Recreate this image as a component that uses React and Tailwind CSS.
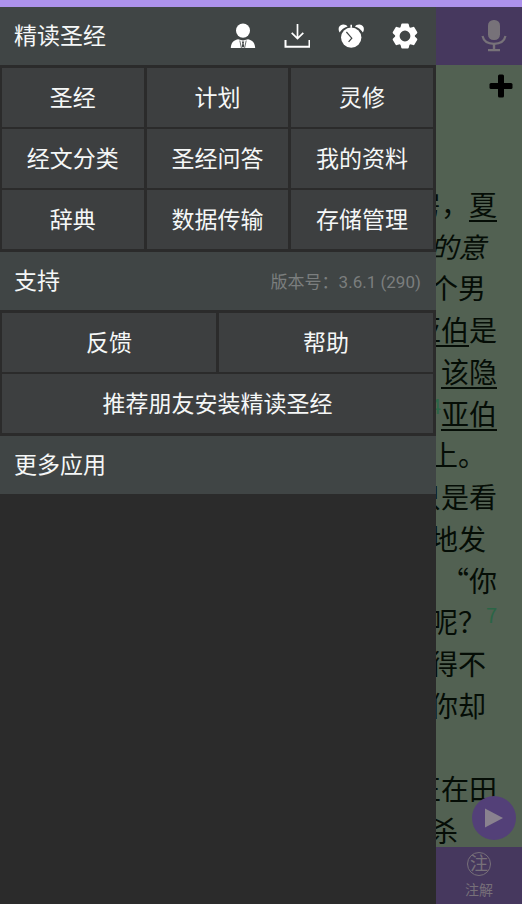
import React from "react";

const menuItems = [
  "圣经",
  "计划",
  "灵修",
  "经文分类",
  "圣经问答",
  "我的资料",
  "辞典",
  "数据传输",
  "存储管理",
];

const UserIcon = () => (
  <svg viewBox="0 0 26 26" className="size-[26px]" fill="currentColor">
    <ellipse cx="13" cy="7.6" rx="7" ry="7.2" />
    <path d="M.8 25c.2-4.600 2.200-7.600 7.200-8.800l5 1.200 5-1.200c5 1.200 7 4.200 7.200 8.800z" />
    <path
      d="M9.800 17.500l1.600 7.500M16.200 17.500l-1.600 7.500"
      fill="none"
      stroke="#404545"
      strokeWidth=".8"
    />
    <path d="M11.800 18.600h2.400l-.6 1.800.6 3-1.200 1.300-1.200-1.300.6-3z" fill="#404545" />
  </svg>
);

const DownloadIcon = () => (
  <svg
    viewBox="0 0 26 26"
    className="size-[26px]"
    fill="none"
    stroke="currentColor"
    strokeWidth="1.700"
  >
    <path d="M13.500 1v14.500M7.700 9.800l5.800 5.800 5.800-5.800" />
    <path d="M1.500 17v6.800h24V17" strokeWidth="2" />
  </svg>
);

const AlarmIcon = () => (
  <svg viewBox="0 0 26 26" className="size-[26px]" fill="currentColor">
    <path d="M1.600 9.400C-.6 5.600 1 1.600 5 1.400c2.200-.1 3.800.8 4.600 2.200-3.600 1.200-6 3.200-8 5.800z" />
    <path d="M24.900 9.400c2.200-3.800.6-7.800-3.400-8-2.200-.1-3.800.8-4.600 2.200 3.600 1.200 6 3.200 8 5.800z" />
    <circle cx="13.200" cy="14.600" r="10.200" />
    <path d="M12.400 1.800h1.600v3h-1.600z" />
    <path
      d="M8.400 9l5.400 6.200-3.200 3.600"
      fill="none"
      stroke="#404545"
      strokeWidth="1.200"
    />
  </svg>
);

const GearIcon = () => (
  <svg viewBox="0 0 26 26" className="size-[26px]" fill="currentColor">
    <circle cx="13" cy="13" r="7.600" fill="none" stroke="currentColor" strokeWidth="4.400" />
    {[0, 60, 120, 180, 240, 300].map((angle) => (
      <path
        key={angle}
        d="M8.200 5.400l1-4q.2-.9 1.100-.9h5.400q.9 0 1.100.9l1 4z"
        transform={`rotate(${angle} 13 13)`}
      />
    ))}
  </svg>
);

const MicIcon = () => (
  <svg viewBox="0 0 26 32" className="h-8 w-[26px]" fill="currentColor">
    <rect x="7" y="0" width="12" height="20" rx="5.500" />
    <path
      d="M1.500 16c1.200 5.400 5.600 7.800 11.500 7.800S23.300 21.400 24.500 16"
      fill="none"
      stroke="currentColor"
      strokeWidth="2.200"
    />
    <path d="M11.800 24h2.400v5h-2.400zM7 29h12v2.200H7z" />
  </svg>
);

const headerActions = [
  { label: "账户", Icon: UserIcon },
  { label: "下载", Icon: DownloadIcon },
  { label: "提醒", Icon: AlarmIcon },
  { label: "设置", Icon: GearIcon },
];

const MenuButton = ({ children, className = "" }) => (
  <button
    type="button"
    className={`flex h-[59px] items-center justify-center bg-[#3d3f40] pt-[2px] text-[23px] leading-8 ${className}`}
  >
    {children}
  </button>
);

const SectionHeader = ({ title, children }) => (
  <div className="flex h-[58px] items-center justify-between bg-[#404545] pl-[14px] pr-[15px] pt-[2px]">
    <h2 className="text-[23px] leading-8">{title}</h2>
    {children}
  </div>
);

const Drawer = () => (
  <aside className="w-[83.5%] shrink-0 bg-[#2b2b2b] text-[#f5f7f7]">
    <header className="flex h-[58px] items-center justify-between bg-[#404545] pl-[14px] pr-[18px]">
      <h1 className="pt-[2px] text-[23px] leading-8">精读圣经</h1>
      <div className="flex items-center gap-7">
        {headerActions.map(({ label, Icon }) => (
          <button key={label} type="button" aria-label={label} className="text-white">
            <Icon />
          </button>
        ))}
      </div>
    </header>
    <nav className="grid grid-cols-3 gap-x-[3px] gap-y-[2px] py-[3px] pl-[2px] pr-[3px]">
      {menuItems.map((item) => (
        <MenuButton key={item}>{item}</MenuButton>
      ))}
    </nav>
    <SectionHeader title="支持">
      <span className="text-[17px] leading-6 text-[#7b7e7e]">版本号：3.6.1 (290)</span>
    </SectionHeader>
    <div className="grid grid-cols-2 gap-x-[3px] gap-y-[2px] py-[3px] pl-[2px] pr-[3px]">
      <MenuButton>反馈</MenuButton>
      <MenuButton>帮助</MenuButton>
      <MenuButton className="col-span-2">推荐朋友安装精读圣经</MenuButton>
    </div>
    <SectionHeader title="更多应用" />
  </aside>
);

const Line = ({ children, className = "pr-[25px]" }) => (
  <p className={`flex items-center justify-end whitespace-nowrap ${className}`}>{children}</p>
);

const Name = ({ children }) => (
  <span className="underline decoration-2 underline-offset-4">{children}</span>
);

const VerseNumber = ({ children }) => (
  <sup className="static self-start text-[20px] leading-7 text-[#2b6546]">{children}</sup>
);

const Reader = () => (
  <main className="flex min-w-0 flex-1 flex-col overflow-hidden bg-[#526152]">
    <div className="flex h-[58px] shrink-0 items-center justify-end bg-[#46385e] pr-[15px]">
      <button type="button" aria-label="语音" className="text-[#777279]">
        <MicIcon />
      </button>
    </div>
    <div className="relative min-h-0 flex-1 overflow-hidden">
      <div className="flex h-[118px] items-start justify-end pr-[9px] pt-[9px]">
        <button type="button" aria-label="添加" className="text-black">
          <svg viewBox="0 0 24 24" className="size-6" fill="currentColor">
            <rect x="9" y="0.500" width="6" height="23" rx="1.500" />
            <rect x="0.500" y="9" width="23" height="6" rx="1.500" />
          </svg>
        </button>
      </div>
      <article className="grid h-[668px] auto-rows-fr grid-cols-1 font-['Noto_Sans_CJK_SC',sans-serif] text-[28px] leading-none text-[#050d06]">
        <Line>房，<Name>夏</Name></Line>
        <Line className="pr-[36px] italic">的意</Line>
        <Line className="pr-[36px]">个男</Line>
        <Line><Name>亚伯</Name>是</Line>
        <Line><Name>该隐</Name></Line>
        <Line><VerseNumber>4</VerseNumber><Name>亚伯</Name></Line>
        <Line className="pr-[36px]">上。</Line>
        <Line>只是看</Line>
        <Line className="pr-[36px]">地发</Line>
        <Line>“你</Line>
        <Line>呢？<VerseNumber>7</VerseNumber></Line>
        <Line className="pr-[36px]">得不</Line>
        <Line className="pr-[36px]">你却</Line>
        <div></div>
        <Line>正在田</Line>
        <Line className="pr-[64px]">杀</Line>
      </article>
      <button
        type="button"
        aria-label="播放"
        className="absolute bottom-[7px] right-[6px] flex size-11 items-center justify-center rounded-full bg-[#534078] text-[#8a828f]"
      >
        <svg viewBox="0 0 44 44" className="size-11" fill="currentColor">
          <path d="M13 12.500L31 22 13 31.500z" />
        </svg>
      </button>
    </div>
    <footer className="flex h-[57px] shrink-0 justify-center bg-[#46385e]">
      <button type="button" className="flex flex-col items-center pt-[5px] text-[#777079]">
        <span className="flex size-6 items-center justify-center rounded-full border border-current text-lg leading-none">
          注
        </span>
        <span className="text-sm leading-[28px]">注解</span>
      </button>
    </footer>
  </main>
);

const App = () => (
  <div className="flex h-screen flex-col overflow-hidden bg-[#2b2b2b] font-[Roboto,'Noto_Sans_CJK_SC',sans-serif]">
    <div className="h-[7px] shrink-0 bg-[#ad92ec]"></div>
    <div className="flex min-h-0 flex-1">
      <Drawer />
      <Reader />
    </div>
  </div>
);

export default App;
